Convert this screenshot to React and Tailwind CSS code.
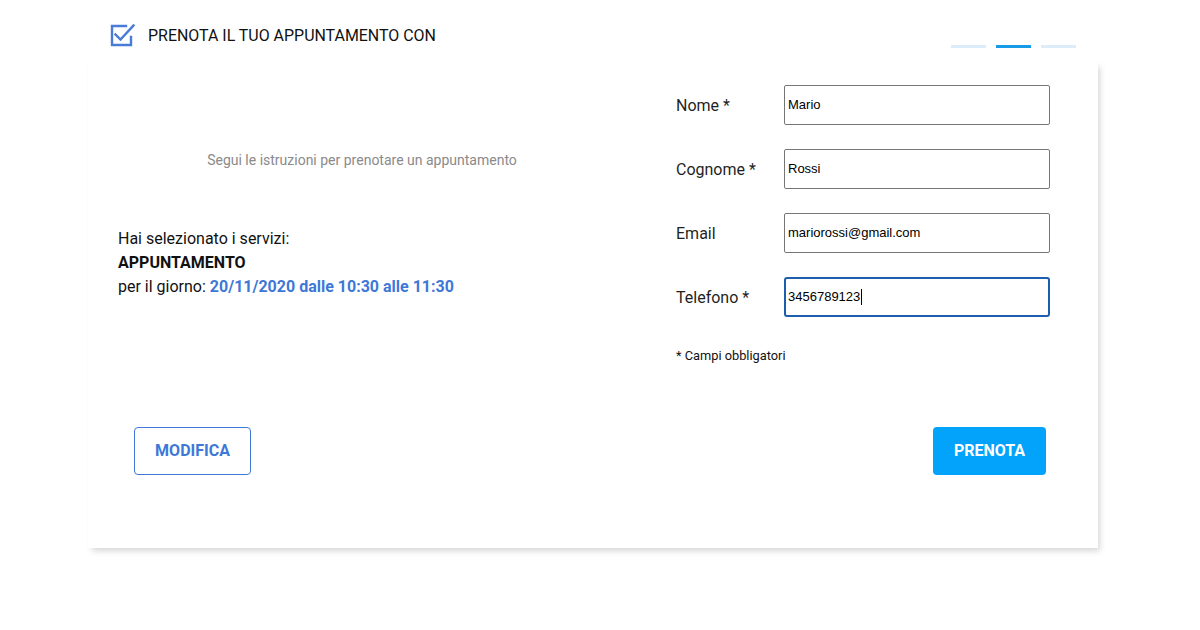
const Field = ({ label, value, focused }) => {
  return (
    <div className="flex items-center h-[40px]">
      <label className="w-[108px] text-[16px] text-[#1f1f1f] pt-[2px]">{label}</label>
      <div
        className={
          focused
            ? "w-[266px] h-[40px] border-2 border-[#1d5fae] rounded-[3px] flex items-center pl-[2px]"
            : "w-[266px] h-[40px] border border-[#767676] rounded-[2px] flex items-center pl-[3px]"
        }
      >
        <span className="font-['Liberation_Sans',Arial,sans-serif] text-[13px] text-black">
          {value}
        </span>
        {focused && <span className="w-px h-[16px] bg-black ml-px" />}
      </div>
    </div>
  );
};

const CheckIcon = () => (
  <svg width="26" height="24" viewBox="0 0 26 24" fill="none">
    <path
      d="M16 3H2v19h19v-8"
      stroke="#4a7bd6"
      strokeWidth="2.4"
      strokeLinecap="square"
    />
    <path
      d="M5.5 11.5l5 5L23.5 2.5"
      stroke="#4a7bd6"
      strokeWidth="2.4"
      strokeLinecap="square"
    />
  </svg>
);

export default function App() {
  return (
    <div className="w-[1200px] h-[630px] bg-white font-['Roboto',sans-serif] overflow-hidden">
      {/* header */}
      <div className="h-[62px] flex justify-between pl-[110px] pr-[124px]">
        <div className="flex items-center gap-[12px] h-[48px] pt-[22px]">
          <CheckIcon />
          <span className="text-[15.95px] text-[#111] pt-[2px]">
            PRENOTA IL TUO APPUNTAMENTO CON
          </span>
        </div>
        <div className="flex gap-[10px] mt-[45px] h-[3px]">
          <div className="w-[35px] h-[3px] bg-[#dcedf9]" />
          <div className="w-[35px] h-[3px] bg-[#189be6]" />
          <div className="w-[35px] h-[3px] bg-[#dcedf9]" />
        </div>
      </div>

      {/* card */}
      <div className="ml-[88px] w-[1010px] h-[486px] bg-white shadow-[3px_4px_6px_-1px_rgba(0,0,0,0.16)] flex flex-col">
        <div className="flex pt-[23px] pl-[30px]">
          <div className="w-[488px]">
            <p className="mt-[65px] text-center text-[14px] leading-[20px] text-[#8a8a8a]">
              Segui le istruzioni per prenotare un appuntamento
            </p>
            <div className="mt-[57px] text-[16px] leading-[24px] text-[#111]">
              <p>Hai selezionato i servizi:</p>
              <p className="font-bold">APPUNTAMENTO</p>
              <p>
                per il giorno:{" "}
                <span className="font-bold text-[#3d78d8]">
                  20/11/2020 dalle 10:30 alle 11:30
                </span>
              </p>
            </div>
          </div>
          <div className="ml-[70px] flex flex-col">
            <div className="flex flex-col gap-[24px]">
              <Field label="Nome *" value="Mario" />
              <Field label="Cognome *" value="Rossi" />
              <Field label="Email" value="mariorossi@gmail.com" />
              <Field label="Telefono *" value="3456789123" focused />
            </div>
            <p className="mt-[31px] text-[12.8px] leading-[16px] text-[#111]">
              * Campi obbligatori
            </p>
          </div>
        </div>
        <div className="flex justify-between pl-[46px] pr-[52px] mt-[63px]">
          <button className="w-[117px] h-[48px] border border-[#3f78d6] rounded-[4px] text-[16px] font-bold text-[#3d78d8]">
            MODIFICA
          </button>
          <button className="w-[113px] h-[48px] rounded-[4px] bg-[#03a2fb] text-[16px] font-bold text-white">
            PRENOTA
          </button>
        </div>
      </div>
    </div>
  );
}
